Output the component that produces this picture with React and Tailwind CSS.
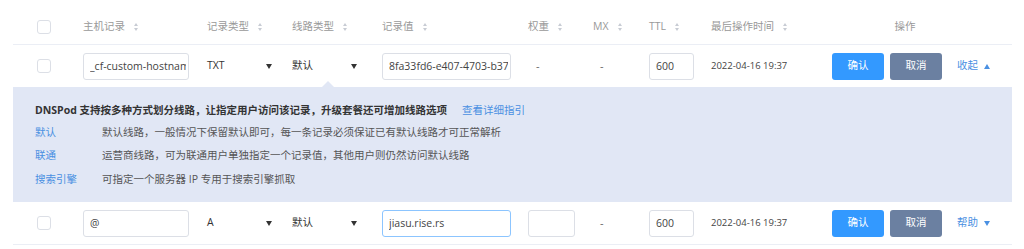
import React from "react";

const F = { fontFamily: '"Open Sans", "Noto Sans CJK SC", sans-serif' };

function Sort() {
  return (
    <span className="inline-flex flex-col gap-[2px] ml-[9px]">
      <span className="w-0 h-0 border-l-[2.5px] border-r-[2.5px] border-b-[3px] border-l-transparent border-r-transparent border-b-[#c8ccd4]" />
      <span className="w-0 h-0 border-l-[2.5px] border-r-[2.5px] border-t-[3px] border-l-transparent border-r-transparent border-t-[#c8ccd4]" />
    </span>
  );
}

function Check() {
  return <span className="block w-[14px] h-[14px] rounded-[3px] border border-[#dcdfe6] bg-white" />;
}

function Down({ c = "#333" }) {
  return <span className="inline-block w-0 h-0 border-l-[3.5px] border-r-[3.5px] border-t-[5px] border-l-transparent border-r-transparent" style={{ borderTopColor: c }} />;
}
function Up({ c = "#333" }) {
  return <span className="inline-block w-0 h-0 border-l-[3.5px] border-r-[3.5px] border-b-[5px] border-l-transparent border-r-transparent" style={{ borderBottomColor: c }} />;
}

function Input({ w, text, focus }) {
  return (
    <input
      readOnly
      value={text}
      className={`block h-[27px] rounded-[3px] bg-white pl-[6px] pr-[2px] text-[10.5px] text-[#444] outline-none border ${focus ? "border-[#8cc5ff]" : "border-[#dcdfe6]"}`}
      style={{ width: w, fontFamily: F.fontFamily }}
    />
  );
}

function Select({ text }) {
  return (
    <div className="w-[65px] flex items-center justify-between text-[10.5px] text-[#333]">
      <span>{text}</span>
      <Down />
    </div>
  );
}

function Row({ host, type, value, focus, weightInput, link, up }) {
  return (
    <div className="flex items-center h-[42px]">
      <div className="w-[70px] pl-[24px]"><Check /></div>
      <div className="w-[124px]"><Input w={106} text={host} /></div>
      <div className="w-[85px]"><Select text={type} /></div>
      <div className="w-[90px]"><Select text="默认" /></div>
      <div className="w-[146px]"><Input w={129} text={value} focus={focus} /></div>
      <div className="w-[65px] text-[#666] text-[11px]">
        {weightInput ? <Input w={47} text="" /> : <div className="pl-[8px]">-</div>}
      </div>
      <div className="w-[56px] pl-[7px] text-[#666] text-[11px]">-</div>
      <div className="w-[62px]"><Input w={45} text="600" /></div>
      <div className="w-[121px] text-[9.5px] text-[#444]">2022-04-16 19:37</div>
      <div className="w-[180px] flex items-center">
        <div className="w-[52px] h-[27px] rounded-[3px] bg-[#3399ff] text-white text-[10.5px] flex items-center justify-center">确认</div>
        <div className="w-[52px] h-[27px] ml-[6px] rounded-[3px] bg-[#6b80a1] text-white text-[10.5px] flex items-center justify-center">取消</div>
        <div className="ml-[15px] flex items-center gap-[6px] text-[#4a90e2] text-[10.5px]">
          <span>{link}</span>
          {up ? <Up c="#4a90e2" /> : <Down c="#4a90e2" />}
        </div>
      </div>
    </div>
  );
}

export default function App() {
  const head = "text-[10.5px] text-[#999] flex items-center";
  return (
    <div className="w-[1024px] h-[249px] bg-white overflow-hidden" style={F}>
      <div className="ml-[13px] w-[999px] pt-[10px]">
        <div className="flex items-center h-[35px] border-b border-[#ebeef5]">
          <div className="w-[70px] pl-[24px]"><Check /></div>
          <div className={`w-[124px] ${head}`}>主机记录<Sort /></div>
          <div className={`w-[85px] ${head}`}>记录类型<Sort /></div>
          <div className={`w-[90px] ${head}`}>线路类型<Sort /></div>
          <div className={`w-[146px] ${head}`}>记录值<Sort /></div>
          <div className={`w-[65px] ${head}`}>权重<Sort /></div>
          <div className={`w-[56px] ${head}`}>MX<Sort /></div>
          <div className={`w-[62px] ${head}`}>TTL<Sort /></div>
          <div className={`w-[121px] ${head}`}>最后操作时间<Sort /></div>
          <div className={`w-[180px] ${head} justify-center pr-[34px]`}>操作</div>
        </div>
        <Row host="_cf-custom-hostname" type="TXT" value="8fa33fd6-e407-4703-b374-1a2b" link="收起" up />
        <div className="relative bg-[#e1e7f5] h-[115px] pl-[22px] pt-[16px] text-[10.5px]">
          <span className="absolute left-[309px] top-[-6px] w-0 h-0 border-l-[6px] border-r-[6px] border-b-[6px] border-l-transparent border-r-transparent border-b-[#e1e7f5]" />
          <div className="flex items-center h-[16px]">
            <span className="font-bold text-[#333]">DNSPod 支持按多种方式划分线路，让指定用户访问该记录，升级套餐还可增加线路选项</span>
            <span className="ml-[15px] text-[#4a90e2]">查看详细指引</span>
          </div>
          <div className="flex items-center h-[16px] mt-[6px]">
            <span className="w-[67px] text-[#4a90e2]">默认</span>
            <span className="text-[#555]">默认线路，一般情况下保留默认即可，每一条记录必须保证已有默认线路才可正常解析</span>
          </div>
          <div className="flex items-center h-[16px] mt-[7px]">
            <span className="w-[67px] text-[#4a90e2]">联通</span>
            <span className="text-[#555]">运营商线路，可为联通用户单独指定一个记录值，其他用户则仍然访问默认线路</span>
          </div>
          <div className="flex items-center h-[16px] mt-[8px]">
            <span className="w-[67px] text-[#4a90e2]">搜索引擎</span>
            <span className="text-[#555]">可指定一个服务器 IP 专用于搜索引擎抓取</span>
          </div>
        </div>
        <div className="border-b border-[#ebeef5]">
          <Row host="@" type="A" value="jiasu.rise.rs" focus weightInput link="帮助" />
        </div>
      </div>
    </div>
  );
}
